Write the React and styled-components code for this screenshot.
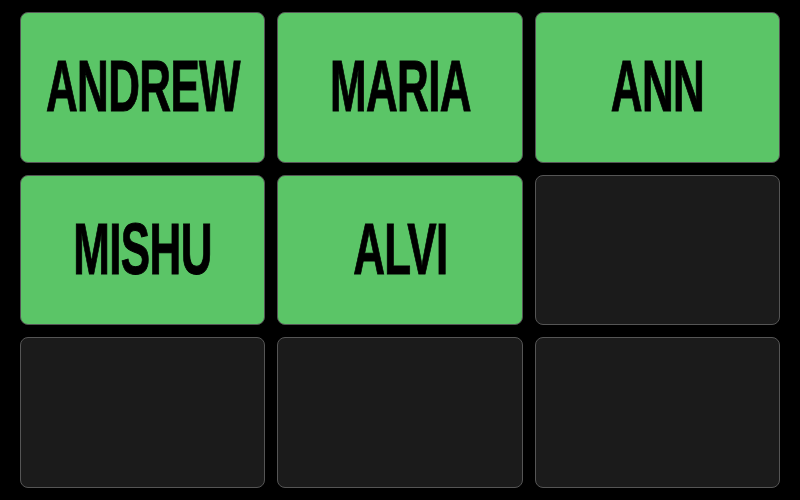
import React from "react";
import styled, { createGlobalStyle } from "styled-components";

const GlobalStyle = createGlobalStyle`
  html, body {
    margin: 0;
    padding: 0;
    background: #000;
    height: 100%;
  }
  #root {
    height: 100%;
  }
`;

const Board = styled.div`
  box-sizing: border-box;
  height: 100vh;
  padding: 12px 20px;
  display: grid;
  grid-template-columns: repeat(3, 1fr);
  grid-template-rows: repeat(3, 1fr);
  gap: 12px;
  background: #000;
`;

const Tile = styled.div`
  box-sizing: border-box;
  border-radius: 8px;
  border: 1.5px solid #555;
  background: ${({ filled }) => (filled ? "#5bc567" : "#1b1b1b")};
  display: flex;
  align-items: center;
  justify-content: center;
  overflow: hidden;
`;

const Name = styled.span`
  font-family: "Liberation Sans", Arial, sans-serif;
  font-weight: bold;
  font-size: 72px;
  line-height: 1;
  color: #000;
  -webkit-text-stroke: 1px #000;
  letter-spacing: -1px;
  transform: scaleX(0.61);
  white-space: nowrap;
  margin-top: -2px;
`;

const names = ["ANDREW", "MARIA", "ANN", "MISHU", "ALVI"];

const App = () => {
  const slots = Array.from({ length: 9 }, (_, i) => names[i] || null);

  return (
    <>
      <GlobalStyle />
      <Board>
        {slots.map((name, i) => (
          <Tile key={i} filled={!!name}>
            {name && <Name>{name}</Name>}
          </Tile>
        ))}
      </Board>
    </>
  );
};

export default App;
